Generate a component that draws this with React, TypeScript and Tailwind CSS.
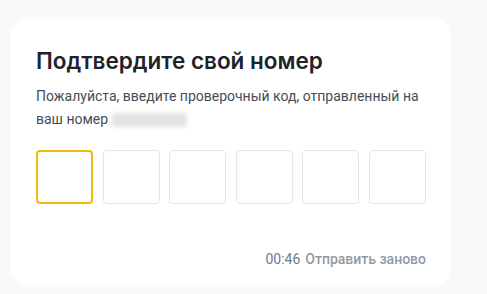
export default function App() {
  return (
    <div className="min-h-screen w-full bg-[#f8f9fa] pl-[11px] pt-[19px] font-['Roboto',sans-serif]">
      <VerifyCard />
    </div>
  );
}

function VerifyCard() {
  const cells = [0, 1, 2, 3, 4, 5];
  return (
    <div className="w-[440px] h-[266px] rounded-2xl bg-white px-[25px] pt-[27px]">
      <h1 className="font-['Inter',sans-serif] text-[22.5px] leading-[30px] font-semibold text-[#1e2329]">
        Подтвердите свой номер
      </h1>
      <p className="mt-[9px] text-[14px] leading-[23px] text-[#474d57]">
        Пожалуйста, введите проверочный код, отправленный на ваш номер{" "}
        <span className="inline-block w-[75px] h-[14px] align-middle rounded-sm bg-[#e3e4e6] blur-[2px]" />
      </p>
      <div className="mt-[19px] flex justify-between">
        {cells.map((i) => (
          <div
            key={i}
            className={
              i === 0
                ? "w-[57px] h-[54px] rounded-[4px] border-2 border-[#f0b90b]"
                : "w-[57px] h-[54px] rounded-[4px] border border-[#e3e5e8]"
            }
          />
        ))}
      </div>
      <div className="mt-[45px] flex justify-end items-center gap-[5px] text-[14px] leading-[20px]">
        <span className="text-[#707a8a]">00:46</span>
        <span className="font-medium text-[#929aa5]">Отправить заново</span>
      </div>
    </div>
  );
}
